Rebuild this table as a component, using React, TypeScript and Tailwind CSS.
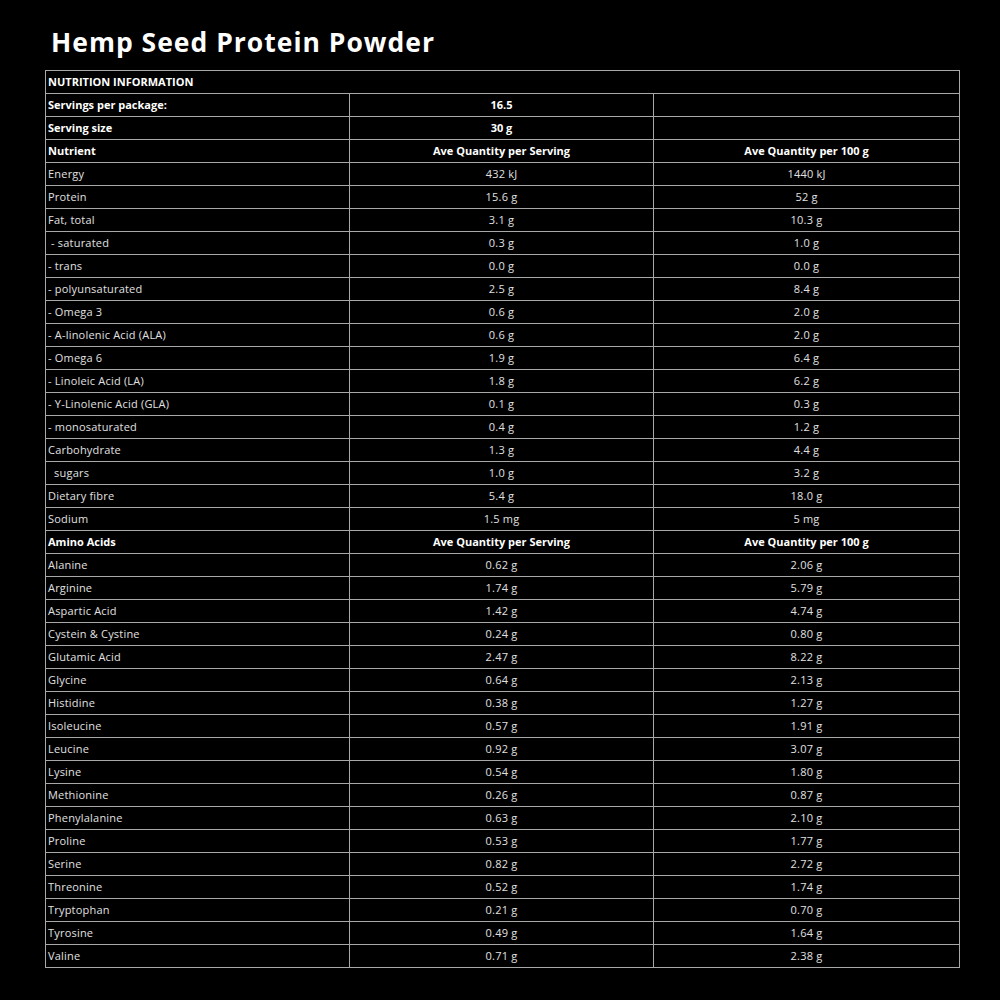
import React from "react";

const nutrients: [string, string, string][] = [
  ["Energy", "432 kJ", "1440 kJ"],
  ["Protein", "15.6 g", "52 g"],
  ["Fat, total", "3.1 g", "10.3 g"],
  [" - saturated", "0.3 g", "1.0 g"],
  ["- trans", "0.0 g", "0.0 g"],
  ["- polyunsaturated", "2.5 g", "8.4 g"],
  ["- Omega 3", "0.6 g", "2.0 g"],
  ["- A-linolenic Acid (ALA)", "0.6 g", "2.0 g"],
  ["- Omega 6", "1.9 g", "6.4 g"],
  ["- Linoleic Acid (LA)", "1.8 g", "6.2 g"],
  ["- Y-Linolenic Acid (GLA)", "0.1 g", "0.3 g"],
  ["- monosaturated", "0.4 g", "1.2 g"],
  ["Carbohydrate", "1.3 g", "4.4 g"],
  ["  sugars", "1.0 g", "3.2 g"],
  ["Dietary fibre", "5.4 g", "18.0 g"],
  ["Sodium", "1.5 mg", "5 mg"],
];

const aminos: [string, string, string][] = [
  ["Alanine", "0.62 g", "2.06 g"],
  ["Arginine", "1.74 g", "5.79 g"],
  ["Aspartic Acid", "1.42 g", "4.74 g"],
  ["Cystein & Cystine", "0.24 g", "0.80 g"],
  ["Glutamic Acid", "2.47 g", "8.22 g"],
  ["Glycine", "0.64 g", "2.13 g"],
  ["Histidine", "0.38 g", "1.27 g"],
  ["Isoleucine", "0.57 g", "1.91 g"],
  ["Leucine", "0.92 g", "3.07 g"],
  ["Lysine", "0.54 g", "1.80 g"],
  ["Methionine", "0.26 g", "0.87 g"],
  ["Phenylalanine", "0.63 g", "2.10 g"],
  ["Proline", "0.53 g", "1.77 g"],
  ["Serine", "0.82 g", "2.72 g"],
  ["Threonine", "0.52 g", "1.74 g"],
  ["Tryptophan", "0.21 g", "0.70 g"],
  ["Tyrosine", "0.49 g", "1.64 g"],
  ["Valine", "0.71 g", "2.38 g"],
];

const td = "border border-[#a8a8a8] h-[23px] p-0 align-middle";

function Row({ cells, bold }: { cells: [string, string, string]; bold?: boolean }) {
  const w = bold ? "font-bold text-white" : "text-[#e0e0e0] tracking-[0.2px]";
  return (
    <tr>
      <td className={`${td} ${w} pl-[2px] whitespace-pre`}>{cells[0]}</td>
      <td className={`${td} ${w} text-center`}>{cells[1]}</td>
      <td className={`${td} ${w} text-center`}>{cells[2]}</td>
    </tr>
  );
}

export default function App() {
  return (
    <div
      className="w-[1000px] h-[1000px] bg-black overflow-hidden"
      style={{ fontFamily: '"Open Sans", "Liberation Sans", sans-serif' }}
    >
      <h1 className="pl-[51px] pt-[26px] text-[26.5px] leading-[32px] font-bold text-white tracking-[1px]">
        Hemp Seed Protein Powder
      </h1>
      <table className="mt-[12px] ml-[45px] w-[914px] table-fixed border-collapse text-[11px] leading-[14px]">
        <colgroup>
          <col className="w-[304px]" />
          <col className="w-[304px]" />
          <col className="w-[306px]" />
        </colgroup>
        <tbody>
          <tr>
            <td colSpan={3} className={`${td} pl-[2px] font-bold text-white`}>
              NUTRITION INFORMATION
            </td>
          </tr>
          <Row cells={["Servings per package:", "16.5", ""]} bold />
          <Row cells={["Serving size", "30 g", ""]} bold />
          <Row cells={["Nutrient", "Ave Quantity per Serving", "Ave Quantity per 100 g"]} bold />
          {nutrients.map((r) => (
            <Row key={r[0]} cells={r} />
          ))}
          <Row cells={["Amino Acids", "Ave Quantity per Serving", "Ave Quantity per 100 g"]} bold />
          {aminos.map((r) => (
            <Row key={r[0]} cells={r} />
          ))}
        </tbody>
      </table>
    </div>
  );
}
